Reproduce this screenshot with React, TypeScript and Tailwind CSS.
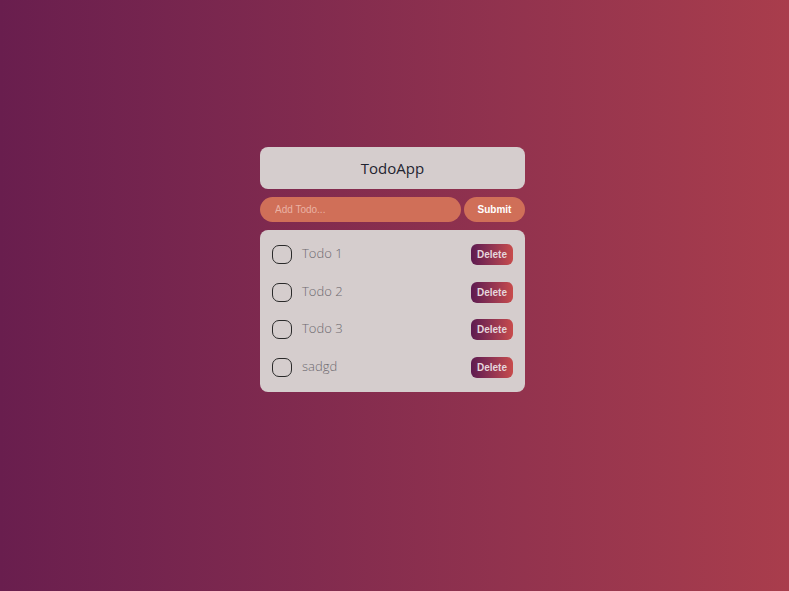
import { useState } from "react"

interface ITodo {
    id: number
    title: string
    done: boolean
}

const initialTodos: ITodo[] = [
    { id: 1, title: "Todo 1", done: false },
    { id: 2, title: "Todo 2", done: false },
    { id: 3, title: "Todo 3", done: false },
    { id: 4, title: "sadgd", done: false },
]

const App = () => {
    const [todos, setTodos] = useState<ITodo[]>(initialTodos)
    const [text, setText] = useState<string>("")

    const addTodo = () => {
        if (!text.trim()) return
        setTodos([...todos, { id: Date.now(), title: text, done: false }])
        setText("")
    }

    const toggleTodo = (id: number) => {
        setTodos(todos.map(t => t.id === id ? { ...t, done: !t.done } : t))
    }

    const deleteTodo = (id: number) => {
        setTodos(todos.filter(t => t.id !== id))
    }

    return (
        <div className="flex min-h-screen w-full justify-center bg-gradient-to-r from-[#691e4e] to-[#a93d4c] pr-[4px] pt-[147px] font-['Open_Sans',sans-serif]">
            <div className="flex h-fit w-[265px] flex-col gap-2">
                <div className="flex h-[42px] items-center justify-center rounded-lg bg-[#d5cdcd]">
                    <h1 className="text-[15px] text-[#1f2430]">TodoApp</h1>
                </div>
                <div className="flex h-[25px] gap-[3px]">
                    <input
                        value={text}
                        onChange={e => setText(e.target.value)}
                        placeholder="Add Todo..."
                        className="h-full w-[201px] rounded-full bg-[#d06f58] px-[15px] font-['Liberation_Sans',sans-serif] text-[10px] text-white outline-none placeholder:text-[#eab2a4]"
                    />
                    <button
                        onClick={addTodo}
                        className="h-full flex-1 rounded-full bg-[#d06f58] font-['Liberation_Sans',sans-serif] text-[10px] font-bold text-white"
                    >
                        Submit
                    </button>
                </div>
                <div className="flex flex-col rounded-lg bg-[#d5cdcd] px-3 py-[6px]">
                    {todos.map(todo => (
                        <div key={todo.id} className="flex h-[37.5px] items-center">
                            <button
                                onClick={() => toggleTodo(todo.id)}
                                className="h-[19px] w-[20px] rounded-[7px] border border-[#2a2a2a]"
                            />
                            <span className="ml-[10px] flex-1 pb-[2px] text-[13px] font-light text-[#6e6a70]">
                                {todo.title}
                            </span>
                            <button
                                onClick={() => deleteTodo(todo.id)}
                                className="h-[21px] w-[42px] rounded-md bg-gradient-to-r from-[#5e1a50] to-[#c84b4b] font-['Liberation_Sans',sans-serif] text-[10px] font-bold text-[#e6d6dc]"
                            >
                                Delete
                            </button>
                        </div>
                    ))}
                </div>
            </div>
        </div>
    )
}
export default App
